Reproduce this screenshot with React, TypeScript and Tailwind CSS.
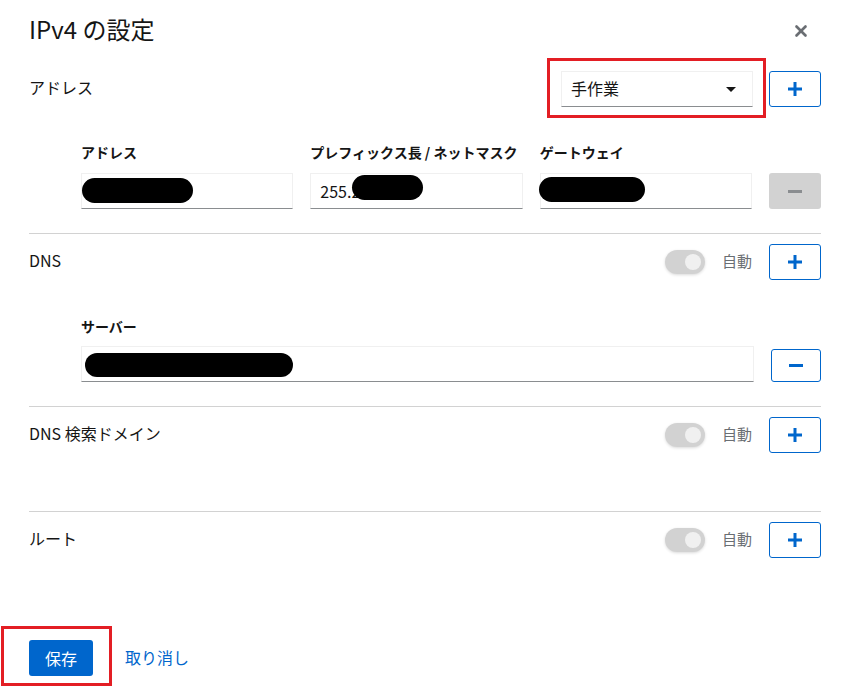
import { X } from "lucide-react";

function PlusIcon() {
  return (
    <svg width="14" height="14" viewBox="0 0 14 14">
      <rect x="0" y="5.5" width="14" height="3" fill="currentColor" />
      <rect x="5.5" y="0" width="3" height="14" fill="currentColor" />
    </svg>
  );
}

function MinusIcon() {
  return (
    <svg width="14" height="3" viewBox="0 0 14 3">
      <rect x="0" y="0" width="14" height="3" fill="currentColor" />
    </svg>
  );
}

function AddButton() {
  return (
    <button className="w-[52px] h-[36px] shrink-0 flex items-center justify-center border border-[#0066cc] rounded-[3px] text-[#0066cc] bg-white">
      <PlusIcon />
    </button>
  );
}

function AutoToggle() {
  return (
    <div className="flex items-center gap-[17px]">
      <div className="relative w-[40px] h-[24px] rounded-full bg-[#d2d2d2] shadow-[0_1px_3px_rgba(0,0,0,0.15)]">
        <div className="absolute right-[4px] top-[4px] w-[16px] h-[16px] rounded-full bg-[#f0f0f0]" />
      </div>
      <span className="text-[15px] leading-[20px] text-[#6a6e73] -mt-[3px]">自動</span>
    </div>
  );
}

function Redact({ className }: { className: string }) {
  return <div className={`absolute bg-black rounded-full ${className}`} />;
}

export default function App() {
  return (
    <div className="w-[841px] h-[686px] bg-white pl-[29px] pr-[20px] flex flex-col text-[#151515] font-['Noto_Sans_CJK_JP','Noto_Sans',sans-serif] overflow-hidden">
      {/* Header */}
      <div className="mt-[14px] h-[32px] flex items-center justify-between">
        <h1 className="text-[24px] leading-[32px] font-normal -mt-[2px]">IPv4 の設定</h1>
        <button className="mr-[11px] mt-[1px] text-[#6a6e73]">
          <X size={18} strokeWidth={3.5} />
        </button>
      </div>

      {/* Address */}
      <div className="mt-[25px] h-[36px] flex items-center justify-between">
        <span className="text-[16px] leading-[20px] -mt-[4px]">アドレス</span>
        <div className="flex items-center gap-[16px]">
          <div className="relative">
            <div className="w-[192px] h-[36px] flex items-center justify-between pl-[9px] pr-[16px] border border-[#f0f0f0] border-b-[#8a8d90] bg-white">
              <span className="text-[16px] leading-[20px] -mt-[3px]">手作業</span>
              <svg width="10" height="5" viewBox="0 0 10 5">
                <path d="M0 0h10L5 5z" fill="#151515" />
              </svg>
            </div>
            <div className="absolute left-[-14px] top-[-13px] w-[219px] h-[60px] border-[3px] border-[#e31e24] pointer-events-none" />
          </div>
          <AddButton />
        </div>
      </div>

      <div className="mt-[35px] pl-[52px] flex gap-[17px]">
        <div className="flex-1 flex flex-col gap-[11px]">
          <span className="text-[14px] leading-[20px] font-bold">アドレス</span>
          <div className="relative h-[36px] border border-[#f0f0f0] border-b-[#8a8d90]">
            <Redact className="left-[0px] top-[4px] w-[111px] h-[25px]" />
          </div>
        </div>
        <div className="flex-1 flex flex-col gap-[11px]">
          <span className="text-[14px] leading-[20px] font-bold whitespace-nowrap">プレフィックス長 / ネットマスク</span>
          <div className="relative h-[36px] border border-[#f0f0f0] border-b-[#8a8d90] flex items-center pl-[9px]">
            <span className="text-[16px] leading-[20px]">255.2</span>
            <Redact className="left-[41px] top-[1px] w-[71px] h-[25px]" />
          </div>
        </div>
        <div className="flex-1 flex flex-col gap-[11px]">
          <span className="text-[14px] leading-[20px] font-bold">ゲートウェイ</span>
          <div className="relative h-[36px] border border-[#f0f0f0] border-b-[#8a8d90]">
            <Redact className="left-[-2px] top-[3px] w-[106px] h-[25px]" />
          </div>
        </div>
        <button className="w-[52px] h-[36px] self-end flex items-center justify-center rounded-[3px] bg-[#d2d2d2] text-[#8a8d90]">
          <MinusIcon />
        </button>
      </div>

      <div className="mt-[24px] h-px bg-[#d2d2d2]" />

      {/* DNS */}
      <div className="mt-[10px] h-[36px] flex items-center justify-between">
        <span className="text-[16px] leading-[20px] -mt-[4px]">DNS</span>
        <div className="flex items-center gap-[17px]">
          <AutoToggle />
          <AddButton />
        </div>
      </div>

      <div className="mt-[36px] pl-[52px] flex gap-[17px]">
        <div className="flex-1 flex flex-col gap-[10px]">
          <span className="text-[14px] leading-[20px] font-bold">サーバー</span>
          <div className="relative h-[36px] border border-[#f0f0f0] border-b-[#8a8d90]">
            <Redact className="left-[3px] top-[6px] w-[208px] h-[24px]" />
          </div>
        </div>
        <button className="w-[50px] h-[33px] self-end flex items-center justify-center border border-[#0066cc] rounded-[3px] text-[#0066cc]">
          <MinusIcon />
        </button>
      </div>

      <div className="mt-[24px] h-px bg-[#d2d2d2]" />

      {/* DNS search domain */}
      <div className="mt-[10px] h-[36px] flex items-center justify-between">
        <span className="text-[16px] leading-[20px] -mt-[4px]">DNS 検索ドメイン</span>
        <div className="flex items-center gap-[17px]">
          <AutoToggle />
          <AddButton />
        </div>
      </div>

      <div className="mt-[58px] h-px bg-[#d2d2d2]" />

      {/* Routes */}
      <div className="mt-[10px] h-[36px] flex items-center justify-between">
        <span className="text-[16px] leading-[20px] -mt-[4px]">ルート</span>
        <div className="flex items-center gap-[17px]">
          <AutoToggle />
          <AddButton />
        </div>
      </div>

      {/* Footer */}
      <div className="mt-[82px] flex items-center gap-[32px]">
        <div className="relative">
          <button className="h-[36px] px-[16px] rounded-[3px] bg-[#0066cc] text-white text-[16px] leading-[20px]">保存</button>
          <div className="absolute left-[-28px] top-[-14px] w-[111px] h-[60px] border-[3px] border-[#e31e24] pointer-events-none" />
        </div>
        <button className="text-[#0066cc] text-[16px] leading-[20px] -mt-[2px]">取り消し</button>
      </div>
    </div>
  );
}
